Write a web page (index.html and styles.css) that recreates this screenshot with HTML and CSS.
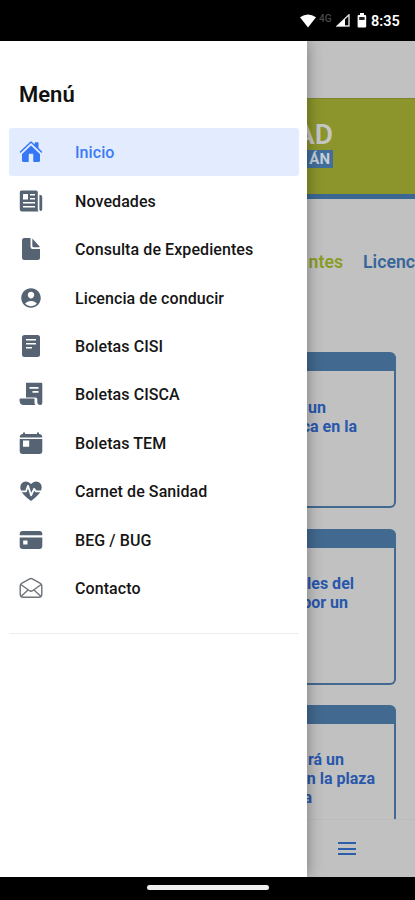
FILE: index.html
```html
<!DOCTYPE html>
<html lang="es">
<head>
<meta charset="utf-8">
<title>Menú</title>
<link rel="stylesheet" href="styles.css">
</head>
<body>
<header class="status">
  <svg class="wifi" width="18" height="14" viewBox="0 0 18 14"><path d="M1 3.2Q9-2.4 17 3.2L9 13.4Z" fill="#fff"/></svg>
  <span class="net">4G</span>
  <svg class="signal" width="14" height="13" viewBox="0 0 14 13"><path d="M13 .8V12H1.2Z" fill="none" stroke="#ddd" stroke-width="1.4"/><path d="M9 4.5V12H1Z" fill="#fff"/></svg>
  <svg class="battery" width="10" height="15" viewBox="0 0 10 15"><path d="M3 0h4v2h1.200q1 0 1 1v10.500q0 1-1 1H1.600q-1 0-1-1V3q0-1 1-1H3Z" fill="#fff"/><path d="M2.200 4h5.400v3H2.200Z" fill="#222"/></svg>
  <span class="time">8:35</span>
</header>
<main class="screen">
  <nav class="drawer">
    <h1>Menú</h1>
    <ul>
      <li class="active"><svg viewBox="0 0 512 512"><path d="M261.5 149.2a8 8 0 0 0-11.1 0L66.6 324.8a8 8 0 0 0-2.4 5.7L64 464a32 32 0 0 0 32 32h96a16 16 0 0 0 16-16V328a8 8 0 0 1 8-8h80a8 8 0 0 1 8 8v152a16 16 0 0 0 16 16h96a32 32 0 0 0 32-32V330.500a8 8 0 0 0-2.400-5.700Z" transform="translate(0 -26)"/><path d="m491 244.200-75-71.700V64a16 16 0 0 0-16-16h-48a16 16 0 0 0-16 16v32l-57.900-55.400C272.800 35.100 264.700 32 256 32s-16.800 3.100-22.200 8.600L21 244.200c-6.200 6-7 15.900-1.300 22.400a16 16 0 0 0 23.300 1L250.500 69.300a8 8 0 0 1 11.100 0L469 267.600a16 16 0 0 0 22.600-.500c6.100-6.400 5.600-16.800-.6-22.900Z"/></svg><span>Inicio</span></li>
      <li><svg viewBox="0 0 24 24"><path fill-rule="evenodd" d="M3 1.500h14a1.800 1.800 0 0 1 1.800 1.800V20.500q0 1 .8 2H3A2.200 2.200 0 0 1 .8 20.300V3.300A1.800 1.800 0 0 1 3 1.500ZM4 5v5.500h5V5Zm7 0v1.400h5V5Zm0 4v1.400h5V9ZM4 13v1.400h12V13Zm0 4v1.400h12V17Z"/><path d="M20.400 6h1a1.800 1.800 0 0 1 1.800 1.800v12.700a1.400 1.400 0 0 1-2.800 0Z"/></svg><span>Novedades</span></li>
      <li><svg viewBox="0 0 24 24"><path d="M5.300 1H11.500V9.800q0 2.200 2.200 2.200H21V20.500q0 2.500-2.500 2.500H5.500Q3 23 3 20.500V3.300Q3 1 5.300 1Z"/><path d="M13.300 1.400 20.600 9.500q.4.700-.6.700h-5.300q-1.400 0-1.400-1.400Z"/></svg><span>Consulta de Expedientes</span></li>
      <li><svg viewBox="0 0 512 512"><path d="M256 48C141.300 48 48 141.300 48 256s93.300 208 208 208 208-93.300 208-208S370.700 48 256 48Zm-50.200 97.500c12.700-13.500 30.500-21 50.200-21s37.400 7.500 50.100 21.100c12.900 13.800 19.200 32.200 17.700 52.100-3 39.300-33.400 71.300-67.800 71.300s-64.900-32-67.800-71.300c-1.500-20 4.800-38.500 17.600-52.200ZM256 432a175.700 175.700 0 0 1-126-53.200 122.900 122.900 0 0 1 35.100-34.300C190.700 328.100 222.900 320 256 320s65.300 8.100 90.800 24.500a122.900 122.900 0 0 1 35.200 34.300A175.600 175.600 0 0 1 256 432Z"/></svg><span>Licencia de conducir</span></li>
      <li><svg viewBox="0 0 24 24"><path fill-rule="evenodd" d="M5.500 1h13Q21 1 21 3.500v17q0 2.500-2.500 2.500h-13Q3 23 3 20.500v-17Q3 1 5.500 1ZM7 5v1.600h10V5Zm0 4v1.600h10V9Zm0 4v1.600h6V13Z"/></svg><span>Boletas CISI</span></li>
      <li><svg viewBox="0 0 24 24"><path fill-rule="evenodd" d="M7 .7h15.300q1 0 1 1V21q0 2-2 2-3 0-3-3v-2.700q0-1.800-1.800-1.800H7ZM10.500 5v1.700h9V5Zm3 4v1.700h6V9Z"/><path d="M1.500 16.500h14v4q0 1.300.8 2.500H4.500q-4 0-4-5.500 0-1 1-1Z"/></svg><span>Boletas CISCA</span></li>
      <li><svg viewBox="0 0 24 24"><path d="M.7 6.500Q.7 3 4 3V1.500h2V3h12V1.500h2V3q3.300 0 3.300 3.500Z"/><path fill-rule="evenodd" d="M.7 8h22.600v12q0 3-3 3H3.700q-3 0-3-3ZM4 9.500v6.200h6.200V9.500Z"/></svg><span>Boletas TEM</span></li>
      <li><svg viewBox="0 0 24 24"><path d="M12 22Q3.700 16 2 11.500-.1 5.700 4 3.300 8.500 1 12 5q3.500-4 8-1.700 4.100 2.400 2 8.200Q20.300 16 12 22Z"/><path d="M.5 12.300H7l2-5.500 3.100 9.500 3-6.500 1.700 2.500h6.700" fill="none" stroke="#fff" stroke-width="1.800" stroke-linejoin="round"/></svg><span>Carnet de Sanidad</span></li>
      <li><svg viewBox="0 0 24 24"><path d="M.7 7.200V6q0-3 3-3h16.600q3 0 3 3v1.200Z"/><path fill-rule="evenodd" d="M.7 9.500h22.600v8.500q0 3-3 3H3.700q-3 0-3-3ZM4.200 12.500v4h4.300v-4Z"/></svg><span>BEG / BUG</span></li>
      <li><svg viewBox="0 0 24 24"><g fill="none" stroke="#6d737b" stroke-width="1.400" stroke-linejoin="round" stroke-linecap="round"><path d="M1.200 9.800Q1.200 8 3 7.100L10.700 2.900q1.300-.7 2.600 0L21 7.100q1.800.9 1.800 2.700v8.400q0 3-3 3H4.200q-3 0-3-3Z"/><path d="m1.800 8.500 8.700 6.200q1.500 1 3 0l8.700-6.200M2.500 20 9 14M21.500 20 15 14"/></g></svg><span>Contacto</span></li>
    </ul>
  </nav>
  <section class="page">
    <div class="banner"><b>AD</b><span>ÁN</span></div>
    <div class="tabs"><span class="on">ntes</span><span>Licenc</span></div>
    <div class="cards">
      <article><p class="w19">un</p><p class="w50">ca en la</p></article>
      <article><p class="w47">les del</p><p class="w41">por un</p></article>
      <article><p class="w37">rá un</p><p class="w68">n la plaza</p><p class="w5">a</p></article>
    </div>
    <footer><i></i><i></i><i></i></footer>
  </section>
</main>
<div class="home"><i></i></div>
</body>
</html>
```
FILE: styles.css
```css
* { box-sizing: border-box; margin: 0; padding: 0; }
body {
  width: 415px; height: 900px; overflow: hidden;
  display: flex; flex-direction: column;
  background: #000; font-family: Roboto, sans-serif;
}
.status {
  height: 41px; flex: none; display: flex; align-items: center;
  padding-left: 299px; color: #fff;
}
.status svg { flex: none; }
.net { font-size: 10px; font-weight: 500; color: #484848; margin: -4px 0 0 2px; width: 16px; }
.signal { margin-left: 1px; }
.battery { margin-left: 7px; }
.time { font-size: 14.5px; font-weight: 600; margin: 2px 0 0 4px; }
.screen { height: 836px; flex: none; display: flex; }
.drawer {
  width: 307px; flex: none; background: #fff; z-index: 1;
  box-shadow: 0 0 14px rgba(0, 0, 0, .38); clip-path: inset(0 -20px 0 0);
}
h1 { font-size: 22px; line-height: 30px; font-weight: 600; color: #111; padding: 39px 0 0 19px; }
ul { list-style: none; margin: 18px 8px 0 9px; height: 506px; border-bottom: 1px solid #ededed; }
li {
  height: 48.450px; display: flex; align-items: center; padding-left: 10px;
  border-radius: 3px; font-size: 16px; font-weight: 500; letter-spacing: .08px; color: #151515;
}
li span { padding-top: 1px; }
li svg { width: 24px; height: 24px; fill: #566373; margin-right: 32px; flex: none; }
.active { background: #e3ebfe; color: #3b7cf5; }
.active svg { fill: #3478f5; }
.page { width: 108px; background: #c1c1c1; display: flex; flex-direction: column; overflow: hidden; padding-top: 57px; }
.banner {
  height: 101px; flex: none; background: #8b952b; border-bottom: 5px solid #3c6792;
  display: flex; flex-direction: column; align-items: flex-end; padding: 21px 82px 0 0; border-top: 1px solid #7c852e;
}
.banner b { font: 600 28px/30px Roboto, sans-serif; color: #c5c5c5; }
.banner span {
  background: #416e9c; color: #c5ced8; font: 700 15px/19px Roboto, sans-serif;
  width: 26px; height: 18px; text-align: right; padding-right: 3px; flex: none;
}
.tabs { height: 153px; flex: none; padding-top: 51px; display: flex; font-size: 17.7px; line-height: 24px; font-weight: 600; color: #38659a; }
.tabs span { flex: none; }
.tabs .on { width: 36px; margin-right: 20px; color: #8b9c24; display: flex; justify-content: flex-end; }
.cards { height: 467px; flex: none; overflow: hidden; display: flex; flex-direction: column; gap: 20.500px; }
article {
  width: 89px; height: 156px; flex: none; border: 2px solid #42698f; border-left: 0;
  border-top-width: 19px; border-radius: 0 6px 6px 0; padding-top: 27px;
}
article + article { padding-top: 26px; }
article p { display: flex; justify-content: flex-end; white-space: nowrap; font-size: 16px; line-height: 19px; font-weight: 700; color: #2857ac; }
.w19 { width: 19px; }
.w50 { width: 50px; }
.w47 { width: 47px; }
.w41 { width: 41px; }
.w37 { width: 37px; }
.w68 { width: 68px; }
.w5 { width: 5px; }
footer { flex: 1; border-top: 1px solid #bcbcbc; padding: 22px 0 0 31px; display: flex; flex-direction: column; gap: 3.500px; }
footer i { width: 18px; height: 2px; background: #2c5da9; flex: none; }
.home { flex: 1; display: flex; justify-content: center; padding-top: 8px; }
.home i { width: 122px; height: 5px; border-radius: 3px; background: #eee; }
```
